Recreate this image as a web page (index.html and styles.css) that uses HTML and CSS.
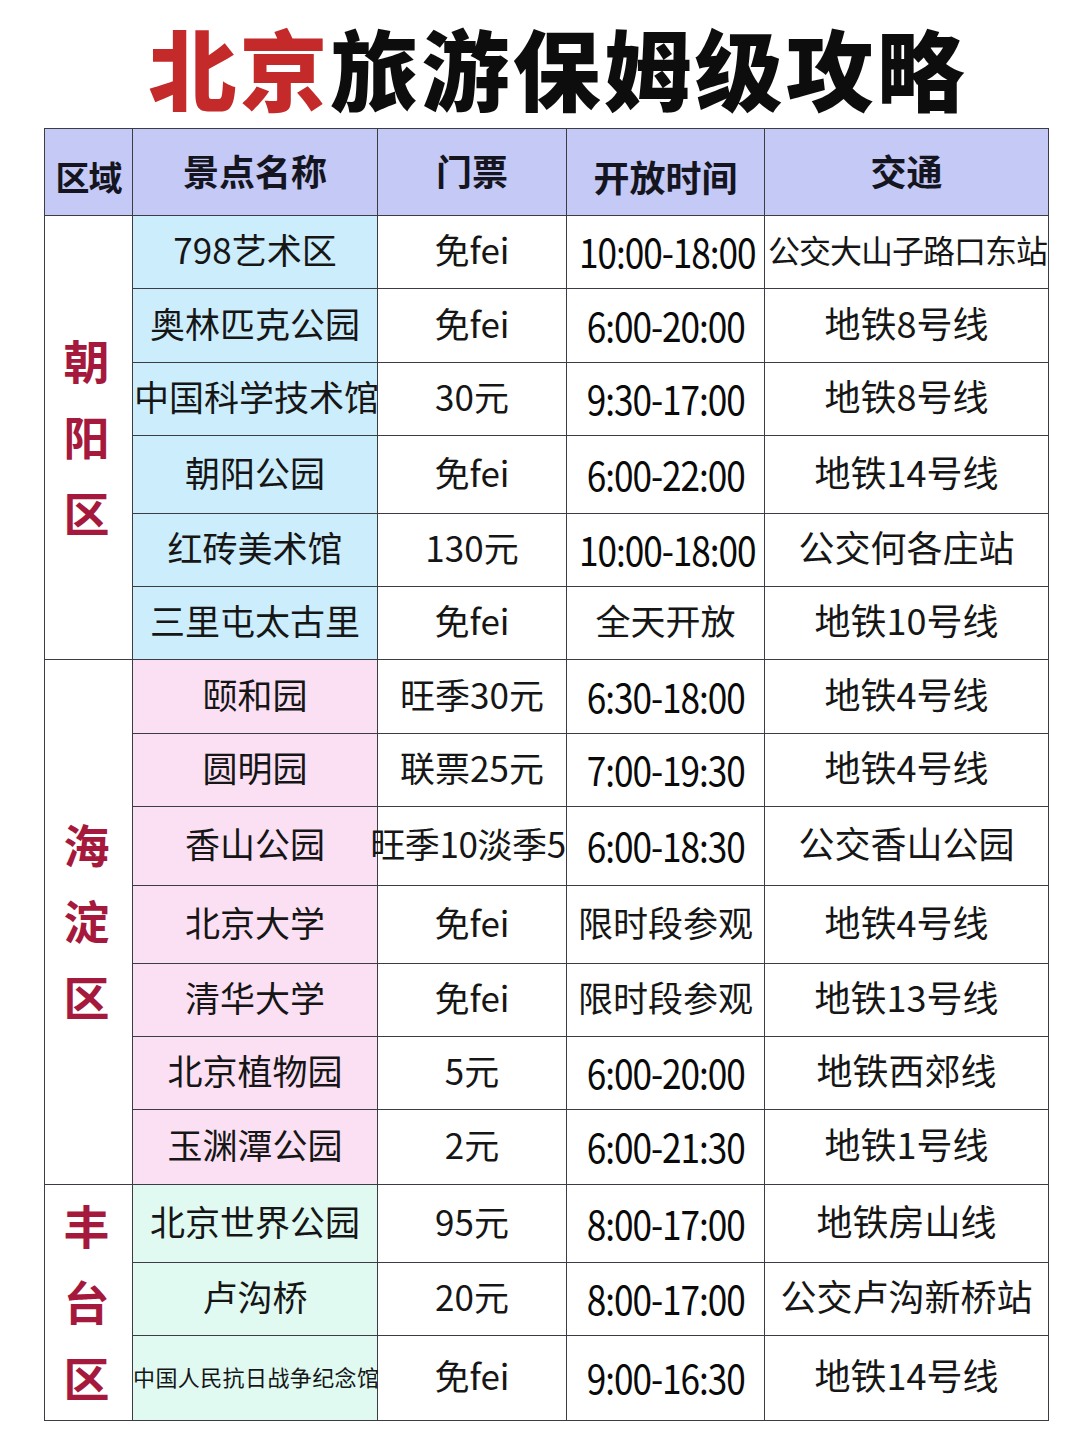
FILE: index.html
```html
<!DOCTYPE html>
<html lang="zh-CN">
<head>
<meta charset="utf-8">
<title>北京旅游保姆级攻略</title>
<link rel="stylesheet" href="styles.css">
</head>
<body>
<h1 class="title"><span class="red">北京</span>旅游保姆级攻略</h1>
<table class="guide">
  <colgroup>
    <col class="c-area"><col class="c-name"><col class="c-ticket"><col class="c-time"><col class="c-traffic">
  </colgroup>
  <thead>
    <tr class="head">
      <th class="low">区域</th><th>景点名称</th><th>门票</th><th class="low">开放时间</th><th>交通</th>
    </tr>
  </thead>
  <tbody>
    <tr class="r1">
      <td class="area" rowspan="6"><span>朝<br>阳<br>区</span></td>
      <td class="name blue">798艺术区</td><td class="tk">免fei</td><td class="tm"><span class="num">10:00-18:00</span></td><td class="tr small">公交大山子路口东站</td>
    </tr>
    <tr class="r2"><td class="name blue">奥林匹克公园</td><td class="tk">免fei</td><td class="tm"><span class="num">6:00-20:00</span></td><td class="tr">地铁8号线</td></tr>
    <tr class="r3"><td class="name blue left">中国科学技术馆</td><td class="tk">30元</td><td class="tm"><span class="num">9:30-17:00</span></td><td class="tr">地铁8号线</td></tr>
    <tr class="r4"><td class="name blue">朝阳公园</td><td class="tk">免fei</td><td class="tm"><span class="num">6:00-22:00</span></td><td class="tr">地铁14号线</td></tr>
    <tr class="r5"><td class="name blue">红砖美术馆</td><td class="tk">130元</td><td class="tm"><span class="num">10:00-18:00</span></td><td class="tr">公交何各庄站</td></tr>
    <tr class="r6"><td class="name blue">三里屯太古里</td><td class="tk">免fei</td><td class="tm">全天开放</td><td class="tr">地铁10号线</td></tr>

    <tr class="r7">
      <td class="area" rowspan="7"><span>海<br>淀<br>区</span></td>
      <td class="name pink">颐和园</td><td class="tk">旺季30元</td><td class="tm"><span class="num">6:30-18:00</span></td><td class="tr">地铁4号线</td>
    </tr>
    <tr class="r8"><td class="name pink">圆明园</td><td class="tk">联票25元</td><td class="tm"><span class="num">7:00-19:30</span></td><td class="tr">地铁4号线</td></tr>
    <tr class="r9"><td class="name pink">香山公园</td><td class="tk wide">旺季10淡季5</td><td class="tm"><span class="num">6:00-18:30</span></td><td class="tr">公交香山公园</td></tr>
    <tr class="r10"><td class="name pink">北京大学</td><td class="tk">免fei</td><td class="tm">限时段参观</td><td class="tr">地铁4号线</td></tr>
    <tr class="r11"><td class="name pink">清华大学</td><td class="tk">免fei</td><td class="tm">限时段参观</td><td class="tr">地铁13号线</td></tr>
    <tr class="r12"><td class="name pink">北京植物园</td><td class="tk">5元</td><td class="tm"><span class="num">6:00-20:00</span></td><td class="tr">地铁西郊线</td></tr>
    <tr class="r13"><td class="name pink">玉渊潭公园</td><td class="tk">2元</td><td class="tm"><span class="num">6:00-21:30</span></td><td class="tr">地铁1号线</td></tr>

    <tr class="r14">
      <td class="area" rowspan="3"><span>丰<br>台<br>区</span></td>
      <td class="name mint">北京世界公园</td><td class="tk">95元</td><td class="tm"><span class="num">8:00-17:00</span></td><td class="tr">地铁房山线</td>
    </tr>
    <tr class="r15"><td class="name mint">卢沟桥</td><td class="tk">20元</td><td class="tm"><span class="num">8:00-17:00</span></td><td class="tr">公交卢沟新桥站</td></tr>
    <tr class="r16"><td class="name mint tiny">中国人民抗日战争纪念馆</td><td class="tk">免fei</td><td class="tm"><span class="num">9:00-16:30</span></td><td class="tr">地铁14号线</td></tr>
  </tbody>
</table>
</body>
</html>
```

FILE: styles.css
```css
html, body {
  margin: 0;
  padding: 0;
  background: #ffffff;
}

body {
  width: 1080px;
  font-family: "Noto Sans CJK SC", "Noto Sans", sans-serif;
  color: #161616;
}

.title {
  margin: 0;
  height: 128px;
  display: flex;
  align-items: center;
  justify-content: center;
  padding-left: 36px;
  padding-top: 4px;
  box-sizing: border-box;
  font-size: 88px;
  font-weight: 900;
  letter-spacing: 3px;
  line-height: 1;
  color: #0d0d0d;
}

.title .red {
  color: #c52a2a;
}

.guide {
  margin-left: 44px;
  width: 1004px;
  table-layout: fixed;
  border-collapse: collapse;
  border: 1.5px solid #3c3c44;
}

.c-area { width: 88px; }
.c-name { width: 245px; }
.c-ticket { width: 189px; }
.c-time { width: 198px; }
.c-traffic { width: 284px; }

.guide th,
.guide td {
  border: 1.5px solid #3c3c44;
  padding: 0 0 6px 0;
  text-align: center;
  vertical-align: middle;
  white-space: nowrap;
  overflow: visible;
  line-height: 1.2;
}

.head {
  height: 87px;
  background: #c4c9f6;
}

.head th {
  font-size: 36px;
  font-weight: 700;
  color: #15151f;
  padding-bottom: 2px;
}

.head th.low {
  padding-top: 12px;
}

.head th:first-child {
  font-size: 34px;
  letter-spacing: -1px;
}

.r1 { height: 73px; }
.r2 { height: 74px; }
.r3 { height: 73px; }
.r4 { height: 78px; }
.r5 { height: 73px; }
.r6 { height: 73px; }
.r7 { height: 74px; }
.r8 { height: 73px; }
.r9 { height: 79px; }
.r10 { height: 78px; }
.r11 { height: 73px; }
.r12 { height: 73px; }
.r13 { height: 75px; }
.r14 { height: 78px; }
.r15 { height: 73px; }
.r16 { height: 85px; }

.area {
  background: #ffffff;
  padding: 0;
}

.area span {
  display: inline-block;
  font-size: 46px;
  font-weight: 700;
  line-height: 76px;
  color: #a5193c;
  margin-right: 4px;
}

.name {
  font-size: 35px;
}

.blue { background: #ccedfb; }
.pink { background: #fbe0f4; }
.mint { background: #e0faf2; }

.name.left {
  text-align: left;
  padding-left: 1px;
}

.name.tiny {
  font-size: 22px;
  letter-spacing: 0.4px;
  text-align: left;
  padding-left: 0;
  padding-bottom: 4px;
}

.tk {
  font-size: 35px;
}

.tk.wide {
  letter-spacing: -0.4px;
  text-indent: -8px;
}

.tm {
  font-size: 35px;
  padding-bottom: 0;
}

.num {
  display: inline-block;
  font-size: 40px;
  font-weight: 400;
  letter-spacing: -1.2px;
  padding-top: 4px;
  color: #0a0a0a;
  transform: scaleX(0.88);
}

.tr {
  font-size: 36px;
}

.tr.small {
  font-size: 32px;
  letter-spacing: -1px;
  text-align: right;
  padding-right: 1px;
}
```
